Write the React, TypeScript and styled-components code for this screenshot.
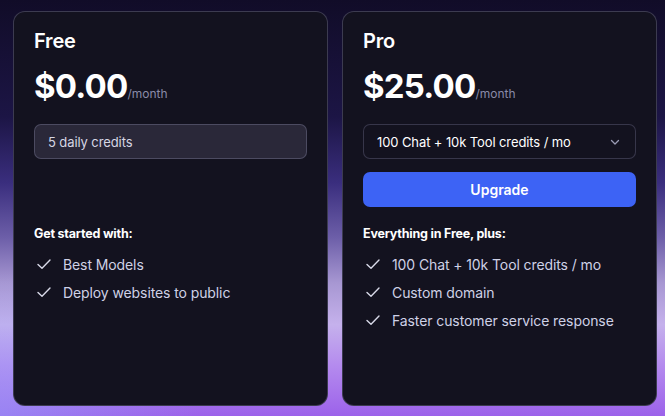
import * as React from 'react'
import styled, {createGlobalStyle} from 'styled-components'

const GlobalStyle = createGlobalStyle`
  html, body {
    margin: 0;
    padding: 0;
    height: 100%;
  }
  body {
    font-family: Inter, "Noto Sans", sans-serif;
    -webkit-font-smoothing: antialiased;
  }
`

const Page = styled.main`
  box-sizing: border-box;
  width: 665px;
  height: 416px;
  padding: 11px 8px 10px 13px;
  display: grid;
  grid-template-columns: 315px 315px;
  gap: 14px;
  background:
    radial-gradient(ellipse 30% 35% at 0% 100%, rgba(150, 170, 255, 0.45) 0%, rgba(150, 170, 255, 0) 100%),
    linear-gradient(to bottom, #110c28 0%, #1c1545 28%, #3a2e7e 44%, #6c5ea8 57%, #a797d2 68%, #c5b1ec 78%, #b48aee 88%, #9c62ea 100%);
`

const Card = styled.section`
  box-sizing: border-box;
  display: flex;
  flex-direction: column;
  padding: 17px 20px 0 20px;
  border-radius: 12px;
  border: 1px solid rgba(170, 165, 210, 0.28);
  background: #13121f;
  color: #fff;
`

const Title = styled.h2`
  margin: 0;
  font-size: 20px;
  line-height: 24px;
  font-weight: 600;
  letter-spacing: -0.2px;
`

const PriceRow = styled.div`
  display: flex;
  align-items: baseline;
  margin-top: 13px;
  height: 40px;
`

const Price = styled.span`
  font-size: 33px;
  line-height: 40px;
  font-weight: 700;
  letter-spacing: -0.8px;
`

const Period = styled.span`
  font-size: 12px;
  color: #8a8ba8;
`

const Controls = styled.div`
  display: flex;
  flex-direction: column;
  gap: 13px;
  margin-top: 18px;
  min-height: 83px;
`

const CreditBox = styled.div<{ $select?: boolean }>`
  box-sizing: border-box;
  height: 35px;
  display: flex;
  align-items: center;
  justify-content: space-between;
  padding: 0 14px 0 13px;
  border-radius: 7px;
  border: 1px solid ${({$select}) => $select ? 'rgba(150, 148, 185, 0.28)' : 'rgba(150, 148, 185, 0.32)'};
  background: ${({$select}) => $select ? '#13121f' : '#2a2839'};
  font-size: 13px;
  letter-spacing: -0.1px;
  color: ${({$select}) => $select ? '#ffffff' : '#d6d6e4'};
`

const UpgradeButton = styled.button`
  height: 35px;
  border: none;
  border-radius: 7px;
  background: #3d63f5;
  color: #fff;
  font-family: inherit;
  font-size: 14px;
  font-weight: 600;
  cursor: pointer;
`

const FeatureHeading = styled.h3`
  margin: 18px 0 0 0;
  font-size: 12.5px;
  line-height: 18px;
  font-weight: 700;
  letter-spacing: -0.2px;
`

const FeatureList = styled.ul`
  list-style: none;
  margin: 7px 0 0 0;
  padding: 0;
`

const FeatureItem = styled.li`
  display: flex;
  align-items: center;
  gap: 11px;
  height: 28px;
  padding-left: 2px;
  font-size: 14px;
  letter-spacing: -0.1px;
  color: #cfd1e6;
`

const Check = () => (
  <svg width="16" height="16" viewBox="0 0 16 16" fill="none">
    <path d="M2 8.4 L6 12.2 L14 4" stroke="#d8d9e8" strokeWidth="1.4" strokeLinecap="round" strokeLinejoin="round"/>
  </svg>
)

const Chevron = () => (
  <svg width="12" height="12" viewBox="0 0 12 12" fill="none">
    <path d="M2.5 4.5 L6 8 L9.5 4.5" stroke="#9a9bb4" strokeWidth="1.3" strokeLinecap="round" strokeLinejoin="round"/>
  </svg>
)

const plans = [
  {
    key: 'free',
    title: 'Free',
    price: '$0.00',
    heading: 'Get started with:',
    features: ['Best Models', 'Deploy websites to public'],
  },
  {
    key: 'pro',
    title: 'Pro',
    price: '$25.00',
    heading: 'Everything in Free, plus:',
    features: ['100 Chat + 10k Tool credits / mo', 'Custom domain', 'Faster customer service response'],
  },
]

const App = () => {
  return (
    <>
      <GlobalStyle/>
      <Page>
        {plans.map(plan => (
          <Card key={plan.key}>
            <Title>{plan.title}</Title>
            <PriceRow>
              <Price>{plan.price}</Price>
              <Period>/month</Period>
            </PriceRow>
            <Controls>
              {plan.key === 'free' ?
                <CreditBox>5 daily credits</CreditBox> :
                <>
                  <CreditBox $select>100 Chat + 10k Tool credits / mo<Chevron/></CreditBox>
                  <UpgradeButton>Upgrade</UpgradeButton>
                </>
              }
            </Controls>
            <FeatureHeading>{plan.heading}</FeatureHeading>
            <FeatureList>
              {plan.features.map(f => (
                <FeatureItem key={f}><Check/>{f}</FeatureItem>
              ))}
            </FeatureList>
          </Card>
        ))}
      </Page>
    </>
  )
}

export default App
